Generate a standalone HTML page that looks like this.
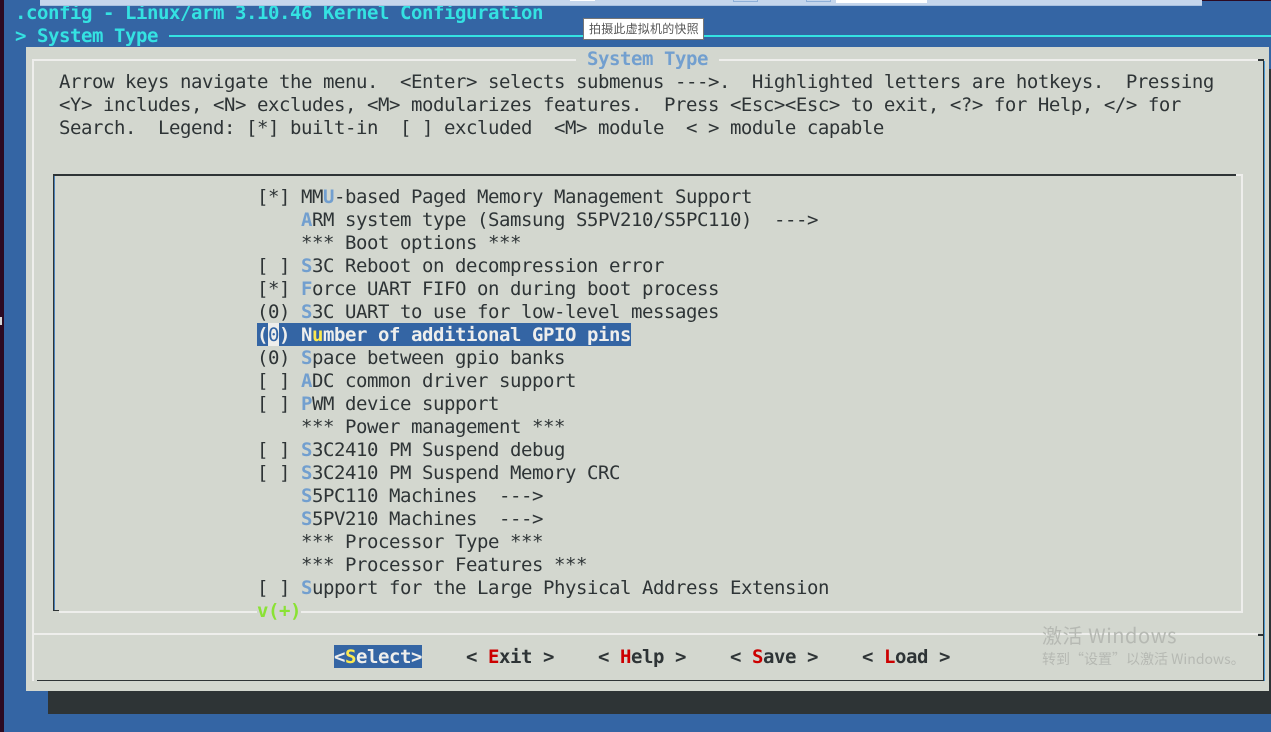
<!DOCTYPE html>
<html lang="zh">
<head>
<meta charset="utf-8">
<title>System Type</title>
<style>
html,body{margin:0;padding:0;width:1271px;height:732px;overflow:hidden;background:#3465a4}
#s{position:relative;width:1271px;height:732px;overflow:hidden;background:#3465a4}
.b{position:absolute}
.t{position:absolute;margin:1px 0 0;white-space:pre;font-family:"DejaVu Sans Mono","Liberation Mono",monospace;font-size:19px;letter-spacing:-.44px;line-height:23px;height:23px;color:#2e3436}
.c{color:#34e2e2;font-weight:bold}
.h{color:#729fcf;font-weight:bold}
.r{color:#cc0000}
.w{color:#eeeeec;font-weight:bold}
.y{color:#fce94f}
.k{font-weight:bold}
</style>
</head>
<body>
<div id="s">
<div class="b" style="left:0;top:0;width:4px;height:732px;background:#2c0a22"></div>
<div class="b" style="left:0;top:317px;width:2px;height:8px;background:#d8d8d8"></div>
<div class="b" style="left:1202px;top:0;width:69px;height:1px;background:#2c0a22"></div>

<p class="t c" style="left:15px;top:1px">.config - Linux/arm 3.10.46 Kernel Configuration</p>
<p class="t c" style="left:15px;top:24px">&gt; System Type</p>
<div class="b" style="left:169px;top:35px;width:1102px;height:2px;background:#34e2e2"></div>

<div class="b" style="left:40px;top:0;width:1162px;height:6px;background:#c5d6ec"></div>
<div class="b" style="left:40px;top:5px;width:1162px;height:1px;background:#a9c1e0"></div>
<div class="b" style="left:570px;top:0;width:25px;height:1px;background:#fff"></div>
<div class="b" style="left:733px;top:0;width:25px;height:2px;border:solid #8fb0d8;border-width:0 1px 1px;box-sizing:border-box"></div>
<div class="b" style="left:806px;top:0;width:25px;height:2px;border:solid #8fb0d8;border-width:0 1px 1px;box-sizing:border-box"></div>
<div class="b" style="left:836px;top:0;width:91px;height:3px;background:#fff"></div>

<div class="b" style="left:48px;top:69px;width:1223px;height:645px;background:#2e3436"></div>
<div class="b" style="left:26px;top:47px;width:1243px;height:644px;background:#d3d7cf"></div>

<!-- outer dialog frame -->
<div class="b" style="left:32px;top:59px;width:1226px;height:2px;background:#eeeeec"></div>
<div class="b" style="left:32px;top:59px;width:2px;height:622px;background:#eeeeec"></div>
<div class="b" style="left:1258px;top:59px;width:6px;height:2px;background:#2e3436"></div>
<div class="b" style="left:1263px;top:59px;width:1px;height:622px;background:#2e3436"></div>
<div class="b" style="left:1264px;top:61px;width:1px;height:620px;background:#4a9ad4"></div>
<div class="b" style="left:37px;top:680px;width:1227px;height:1px;background:#2e3436"></div>
<div class="b" style="left:33px;top:633px;width:1225px;height:2px;background:#eeeeec"></div>
<div class="b" style="left:1258px;top:634px;width:6px;height:2px;background:#2e3436"></div>

<!-- inner box -->
<div class="b" style="left:53px;top:174px;width:1183px;height:2px;background:#2e3436"></div>
<div class="b" style="left:53px;top:174px;width:1px;height:437px;background:#2e3436"></div>
<div class="b" style="left:54px;top:176px;width:1px;height:434px;background:#4a80b8"></div>
<div class="b" style="left:53px;top:610px;width:6px;height:1px;background:#2e3436"></div>
<div class="b" style="left:1236px;top:174px;width:7px;height:2px;background:#eeeeec"></div>
<div class="b" style="left:1241px;top:174px;width:2px;height:439px;background:#eeeeec"></div>
<div class="b" style="left:59px;top:611px;width:1184px;height:2px;background:#eeeeec"></div>

<!-- title -->
<p class="t h" style="left:576px;top:47px;background:#d3d7cf"> System Type </p>

<!-- help text -->
<p class="t" style="left:59px;top:70px">Arrow keys navigate the menu.  &lt;Enter&gt; selects submenus ---&gt;.  Highlighted letters are hotkeys.  Pressing</p>
<p class="t" style="left:59px;top:93px">&lt;Y&gt; includes, &lt;N&gt; excludes, &lt;M&gt; modularizes features.  Press &lt;Esc&gt;&lt;Esc&gt; to exit, &lt;?&gt; for Help, &lt;/&gt; for</p>
<p class="t" style="left:59px;top:116px">Search.  Legend: [*] built-in  [ ] excluded  &lt;M&gt; module  &lt; &gt; module capable</p>

<!-- menu -->
<p class="t" style="left:257px;top:185px">[*] MM<span class="h">U</span>-based Paged Memory Management Support</p>
<p class="t" style="left:257px;top:208px">    <span class="h">A</span>RM system type (Samsung S5PV210/S5PC110)  ---&gt;</p>
<p class="t" style="left:257px;top:231px">    *** Boot options ***</p>
<p class="t" style="left:257px;top:254px">[ ] <span class="h">S</span>3C Reboot on decompression error</p>
<p class="t" style="left:257px;top:277px">[*] <span class="h">F</span>orce UART FIFO on during boot process</p>
<p class="t" style="left:257px;top:300px">(0) <span class="h">S</span>3C UART to use for low-level messages</p>
<div class="b" style="left:257px;top:323px;width:374px;height:23px;background:#3465a4"></div>
<div class="b" style="left:268px;top:323px;width:11px;height:23px;background:#eeeeec"></div>
<p class="t w" style="left:257px;top:323px">(<span style="color:#3465a4;font-weight:normal">0</span>) N<span class="y">u</span>mber of additional GPIO pins</p>
<p class="t" style="left:257px;top:346px">(0) <span class="h">S</span>pace between gpio banks</p>
<p class="t" style="left:257px;top:369px">[ ] <span class="h">A</span>DC common driver support</p>
<p class="t" style="left:257px;top:392px">[ ] <span class="h">P</span>WM device support</p>
<p class="t" style="left:257px;top:415px">    *** Power management ***</p>
<p class="t" style="left:257px;top:438px">[ ] <span class="h">S</span>3C2410 PM Suspend debug</p>
<p class="t" style="left:257px;top:461px">[ ] <span class="h">S</span>3C2410 PM Suspend Memory CRC</p>
<p class="t" style="left:257px;top:484px">    <span class="h">S</span>5PC110 Machines  ---&gt;</p>
<p class="t" style="left:257px;top:507px">    <span class="h">S</span>5PV210 Machines  ---&gt;</p>
<p class="t" style="left:257px;top:530px">    *** Processor Type ***</p>
<p class="t" style="left:257px;top:553px">    *** Processor Features ***</p>
<p class="t" style="left:257px;top:576px">[ ] <span class="h">S</span>upport for the Large Physical Address Extension</p>
<p class="t k" style="left:257px;top:599px;color:#8ae234;background:#d3d7cf">v(+)</p>

<!-- buttons -->
<div class="b" style="left:334px;top:645px;width:88px;height:23px;background:#3465a4"></div>
<p class="t w" style="left:334px;top:645px">&lt;<span class="y">S</span>elect&gt;</p>
<p class="t k" style="left:466px;top:645px">&lt; <span class="r">E</span>xit &gt;</p>
<p class="t k" style="left:598px;top:645px">&lt; <span class="r">H</span>elp &gt;</p>
<p class="t k" style="left:730px;top:645px">&lt; <span class="r">S</span>ave &gt;</p>
<p class="t k" style="left:862px;top:645px">&lt; <span class="r">L</span>oad &gt;</p>

<!-- tooltip -->
<div class="b" style="left:583px;top:18px;width:121px;height:22px;box-sizing:border-box;background:#fff;border:1px solid #767676;color:#575757;font:12px/20px 'Noto Sans CJK SC','WenQuanYi Zen Hei',sans-serif;letter-spacing:.2px;padding-left:5px;white-space:nowrap">拍摄此虚拟机的快照</div>

<!-- watermark -->
<div class="b" style="left:1042px;top:621px;color:#b6b9b3;font:20px/28px 'Noto Sans CJK SC','Liberation Sans',sans-serif;letter-spacing:.55px;white-space:nowrap">激活 Windows</div>
<div class="b" style="left:1042px;top:649px;color:#b6b9b3;font:14px/20px 'Noto Sans CJK SC','Liberation Sans',sans-serif;white-space:nowrap">转到“设置”以激活 Windows。</div>
</div>
</body>
</html>
